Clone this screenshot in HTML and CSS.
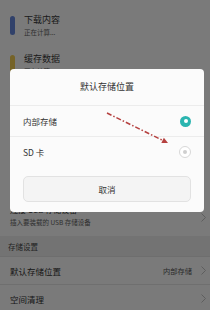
FILE: index.html
```html
<!DOCTYPE html>
<html lang="zh-CN">
<head>
<meta charset="utf-8">
<link rel="stylesheet" href="styles.css">
</head>
<body>
<div class="screen">
  <ul class="list">
    <li class="row row-item">
      <span class="bar bar-blue"></span>
      <div class="txt"><div class="title">下载内容</div><div class="sub">正在计算...</div></div>
    </li>
    <li class="row row-item">
      <span class="bar bar-yellow"></span>
      <div class="txt"><div class="title">缓存数据</div><div class="sub">正在计算...</div></div>
    </li>
  </ul>
  <div class="usage">
    <div class="usage-track"><span class="usage-fill" style="width: 42%"></span></div>
  </div>
  <div class="row row-usb">
    <div class="txt"><div class="title-s">连接 USB 存储设备</div><div class="sub">插入要装载的 USB 存储设备</div></div>
    <svg class="chev" viewBox="0 0 5 9" width="5" height="9"><polyline points="0.5,0.5 4.5,4.5 0.5,8.5"/></svg>
  </div>
  <div class="section">存储设置</div>
  <div class="row row-set">
    <div class="set-title">默认存储位置</div>
    <span class="value">内部存储</span>
    <svg class="chev" viewBox="0 0 5 9" width="5" height="9"><polyline points="0.5,0.5 4.5,4.5 0.5,8.5"/></svg>
  </div>
  <div class="row row-set">
    <div class="set-title">空间清理</div>
    <svg class="chev" viewBox="0 0 5 9" width="5" height="9"><polyline points="0.5,0.5 4.5,4.5 0.5,8.5"/></svg>
  </div>
</div>

<div class="overlay"></div>

<div class="dialog">
  <div class="dialog-title">默认存储位置</div>
  <div class="option">
    <span class="opt-label">内部存储</span>
    <span class="radio radio-on"></span>
  </div>
  <div class="option option-last">
    <span class="opt-label">SD 卡</span>
    <span class="radio radio-off"></span>
  </div>
  <div class="actions">
    <div class="btn">取消</div>
  </div>
</div>

<svg class="annot" viewBox="0 0 210 310" width="210" height="310">
  <line x1="107" y1="113" x2="163" y2="140.5" class="annot-line"/>
  <polygon points="168,143 161.3,143 163.9,137.7" class="annot-head"/>
</svg>
</body>
</html>
```

FILE: styles.css
```css
* { box-sizing: border-box; margin: 0; padding: 0; }
html, body {
  width: 210px;
  height: 310px;
  overflow: hidden;
  background: #ffffff;
  font-family: "Noto Sans CJK SC", "Noto Sans", sans-serif;
}
.screen {
  position: relative;
  width: 210px;
  height: 310px;
  background: #fff;
}
.list { list-style: none; padding-top: 6px; }
.row {
  display: flex;
  align-items: center;
}
.row-item {
  height: 39px;
  padding-left: 10px;
  gap: 9px;
}
.bar {
  width: 5px;
  height: 19px;
  border-radius: 2.5px;
}
.bar-blue { background: #6688dd; }
.bar-yellow { background: #f5cf55; }
.txt { display: flex; flex-direction: column; }
.title {
  font-size: 9px;
  line-height: 11px;
  color: #3a3a3a;
}
.sub {
  font-size: 6.5px;
  line-height: 9px;
  margin-top: 3.5px;
  color: #666;
}
.usage {
  height: 115px;
  padding: 50px 24px 0;
}
.usage-track {
  height: 6px;
  border-radius: 3px;
  background: #eeeeee;
}
.usage-fill {
  display: block;
  height: 6px;
  border-radius: 3px;
  background: #6688dd;
}
.row-usb {
  height: 37px;
  padding: 0 4px 0 10px;
  justify-content: space-between;
}
.row-usb .txt { margin-top: -3px; }
.title-s {
  font-size: 8px;
  line-height: 10px;
  color: #3a3a3a;
}
.row-usb .sub { margin-top: 3px; }
.row-usb .chev { margin-top: -1px; }
.chev { flex: none; }
.chev polyline {
  fill: none;
  stroke: #c4c4c4;
  stroke-width: 1;
}
.section {
  height: 21px;
  background: #f1f1f1;
  padding-left: 8px;
  font-size: 7.5px;
  line-height: 21px;
  color: #4a4a4a;
  border-bottom: 1px solid #e6e6e6;
}
.row-set {
  height: 28px;
  padding: 0 4px 0 10px;
  border-bottom: 1px solid #e8e8e8;
}
.set-title {
  flex: 1;
  font-size: 8.5px;
  color: #333;
}
.value {
  font-size: 7.25px;
  color: #5a5a5a;
  margin-right: 9px;
}
.overlay {
  position: fixed;
  inset: 0;
  background: rgba(0, 0, 0, 0.52);
}
.dialog {
  position: absolute;
  left: 10px;
  top: 69px;
  width: 194px;
  height: 143px;
  background: #fbfbfb;
  border-radius: 4px;
  display: flex;
  flex-direction: column;
}
.dialog-title {
  height: 37px;
  line-height: 36px;
  text-align: center;
  font-size: 9px;
  color: #333;
  border-bottom: 1px solid #ececec;
}
.option {
  height: 31px;
  display: flex;
  align-items: center;
  justify-content: space-between;
  padding: 0 13px;
  border-bottom: 1px solid #ececec;
}
.option-last { height: 30px; border-bottom: none; }
.opt-label {
  font-size: 8.5px;
  color: #333;
}
.radio {
  width: 11px;
  height: 11px;
  border-radius: 50%;
  display: flex;
  align-items: center;
  justify-content: center;
}
.radio::after {
  content: "";
  width: 4px;
  height: 4px;
  border-radius: 50%;
}
.radio-on { background: #2bb5b0; }
.radio-on::after { background: #ffffff; }
.radio-off {
  width: 12px;
  height: 12px;
  border: 1px solid #d8d8d8;
  background: #fff;
}
.radio-off::after { background: #cfcfcf; }
.actions {
  padding: 9px 13px 10px;
}
.btn {
  height: 26px;
  border: 1px solid #e2e2e2;
  border-radius: 5px;
  background: #f4f4f4;
  text-align: center;
  line-height: 24px;
  font-size: 8.5px;
  color: #333;
}
.annot {
  position: absolute;
  left: 0;
  top: 0;
  pointer-events: none;
}
.annot-line {
  stroke: #b5403f;
  stroke-width: 1.5;
  stroke-dasharray: 5 2 1.5 2;
}
.annot-head { fill: #b5403f; }
```
